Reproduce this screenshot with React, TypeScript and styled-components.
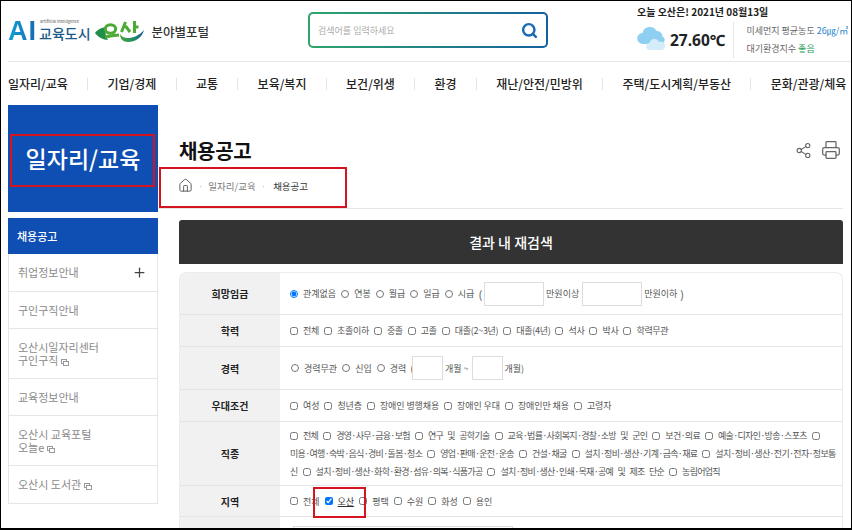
import React from "react";
import styled, { createGlobalStyle } from "styled-components";
import { Plus, Search, Share2, Printer, House } from "lucide-react";

const Global = createGlobalStyle`
  html, body { margin: 0; padding: 0; background: #fff; }
  body { font-family: "Noto Sans CJK KR", "Noto Sans", sans-serif; color: #333; }
  * { box-sizing: border-box; }
`;

const Frame = styled.div`
  position: relative;
  width: 852px;
  height: 530px;
  overflow: hidden;
  background: #fff;
  border-top: 1px solid #000;
  border-left: 1px solid #000;
  border-right: 1px solid #000;
  border-bottom: 2px solid #000;
`;

const Header = styled.header`
  display: flex;
  align-items: stretch;
  height: 61px;
  margin-left: 7px;
  border-bottom: 1px solid #e6e6e6;
`;

const Brand = styled.div`
  display: flex;
  align-items: center;
  width: 300px;
`;

const AiMark = styled.span`
  font-size: 27px;
  font-weight: 700;
  letter-spacing: 1px;
  line-height: 22px;
  font-family: "Liberation Sans", sans-serif;
  background: linear-gradient(90deg, #12a0d8, #1668b0);
  -webkit-background-clip: text;
  background-clip: text;
  color: transparent;
`;

const CityBlock = styled.span`
  position: relative;
  display: block;
  margin-left: 2px;
  font-size: 14px;
  font-weight: 500;
  line-height: 16px;
  color: #1b5a8c;
  padding-top: 3px;
`;

const Tiny = styled.span`
  position: absolute;
  left: 1px;
  top: -3px;
  font-size: 4px;
  line-height: 5px;
  color: #777;
  letter-spacing: 0;
  white-space: nowrap;
`;

const OsanMark = styled.span`
  display: flex;
  align-items: center;
  margin-left: 4px;
  width: 50px;
  height: 22px;
`;

const Portal = styled.span`
  margin-left: 7px;
  font-size: 12.5px;
  font-weight: 500;
  color: #333;
`;

const SearchSlot = styled.div`
  width: 329px;
  padding-top: 11px;
`;

const SearchBox = styled.div`
  display: flex;
  align-items: center;
  justify-content: space-between;
  width: 240px;
  height: 36px;
  padding: 0 8px;
  border: 2px solid transparent;
  border-radius: 5px;
  background: linear-gradient(#fff, #fff) padding-box,
    linear-gradient(90deg, #2fa56a, #14609f) border-box;
  font-size: 9px;
  color: #aaa;
  svg { color: #1a6cb5; }
`;

const Weather = styled.div`
  flex: 1;
  padding-top: 4px;
`;

const WeatherDate = styled.div`
  font-size: 10px;
  line-height: 14px;
  font-weight: 700;
  color: #222;
  white-space: nowrap;
`;

const WeatherRow = styled.div`
  display: flex;
  align-items: center;
  margin-top: 3px;
`;

const CloudSlot = styled.span`
  display: block;
  height: 26px;
  margin-top: -5px;
`;

const Temp = styled.span`
  margin-left: 2px;
  font-family: "Noto Sans", sans-serif;
  font-size: 15.5px;
  font-weight: 700;
  color: #222;
  white-space: nowrap;
`;

const AirInfo = styled.div`
  margin-left: 8px;
  padding-left: 12px;
  border-left: 1px solid #e6e6e6;
  font-size: 9px;
  line-height: 18px;
  color: #666;
  white-space: nowrap;
`;

const Tone = styled.span<{ $c: string }>`
  color: ${(p) => p.$c};
`;

const Nav = styled.nav`
  display: flex;
  align-items: center;
  height: 43px;
  margin-left: 7px;
  white-space: nowrap;
`;

const NavItem = styled.span`
  display: flex;
  align-items: center;
  font-size: 12px;
  font-weight: 500;
  color: #222;
  &:not(:last-child)::after {
    content: "";
    width: 1px;
    height: 12px;
    margin: 0 19.3px;
    background: #e4e4e4;
  }
`;

const Body = styled.div`
  display: flex;
  margin-left: 7px;
  gap: 21px;
`;

const Side = styled.aside`
  width: 150px;
  flex: none;
`;

const Hero = styled.div`
  display: flex;
  align-items: center;
  justify-content: center;
  height: 107px;
  padding-bottom: 2px;
  margin-bottom: 6px;
  background: #0f4fb3;
  color: #fff;
  font-size: 23px;
  font-weight: 500;
`;

const Menu = styled.ul`
  list-style: none;
  margin: 0;
  padding: 0;
  border: 1px solid #e6e6e6;
  border-top: 0;
`;

const MenuItem = styled.li<{ $active?: boolean; $h: number }>`
  display: flex;
  align-items: center;
  justify-content: space-between;
  height: ${(p) => p.$h}px;
  padding: 0 10px 0 9px;
  margin: ${(p) => (p.$active ? "0 -1px" : "0")};
  font-size: 11px;
  line-height: 13px;
  color: ${(p) => (p.$active ? "#fff" : "#8a8a8a")};
  font-weight: ${(p) => (p.$active ? 500 : 400)};
  background: ${(p) => (p.$active ? "#0f4fb3" : "#fff")};
  &:not(:last-child) { border-bottom: ${(p) => (p.$active ? "0" : "1px solid #e6e6e6")}; }
`;

const Ext = styled.svg`
  margin-left: 3px;
  vertical-align: -1px;
`;

const Main = styled.main`
  flex: 1;
  min-width: 0;
  padding-right: 8px;
`;

const TitleBar = styled.div`
  display: flex;
  align-items: center;
  justify-content: space-between;
  height: 32px;
  margin-top: 29px;
`;

const Title = styled.h1`
  margin: 0;
  font-size: 20px;
  font-weight: 700;
  color: #111;
  letter-spacing: -0.3px;
`;

const Tools = styled.div`
  display: flex;
  align-items: center;
  gap: 9px;
  padding-right: 2px;
  svg { color: #666; }
`;

const Crumbs = styled.div`
  display: flex;
  align-items: center;
  height: 43px;
  margin: 0 0 0 -21px;
  padding: 0 0 3px 20px;
  border-bottom: 1px solid #e6e6e6;
  font-size: 9.5px;
  color: #777;
  svg { color: #555; }
`;

const Dot = styled.span`
  margin: 0 5px;
  color: #bbb;
`;

const Current = styled.span`
  margin-left: 2px;
  color: #333;
`;

const SearchTitle = styled.div`
  display: flex;
  align-items: center;
  justify-content: center;
  height: 44px;
  margin-top: 11px;
  border-radius: 3px 3px 0 0;
  background: #333;
  color: #fff;
  font-size: 14px;
  font-weight: 500;
`;

const Table = styled.div`
  margin-top: 8px;
  border-radius: 7px 7px 0 0;
  border: 1px solid #ececec;
  border-bottom: 0;
  overflow: hidden;
`;

const Row = styled.div<{ $h: number }>`
  display: flex;
  height: ${(p) => p.$h}px;
  border-bottom: 1px solid #e4e4e4;
`;

const Head = styled.div`
  display: flex;
  align-items: center;
  justify-content: center;
  width: 100px;
  flex: none;
  background: #f1f1f1;
  font-size: 10px;
  font-weight: 700;
  color: #222;
`;

const Cell = styled.div<{ $top?: boolean }>`
  flex: 1;
  display: flex;
  flex-direction: column;
  justify-content: ${(p) => (p.$top ? "flex-start" : "center")};
  padding: ${(p) => (p.$top ? "9px 0 0 10px" : "0 0 0 10px")};
  font-size: 9px;
  color: #555;
  white-space: nowrap;
`;

const Line = styled.div<{ $ls?: number; $pad?: number }>`
  display: flex;
  align-items: center;
  height: 18px;
  padding-left: ${(p) => p.$pad ?? 0}px;
  letter-spacing: ${(p) => p.$ls ?? 0}px;
`;

const JobLine = styled(Line)`
  letter-spacing: -0.7px;
  word-spacing: 3px;
`;

const Choice = styled.label`
  display: inline-flex;
  align-items: center;
  margin-right: 5px;
`;

const Box = styled.input`
  width: 8px;
  height: 8px;
  margin: 0 5px 0 0;
  flex: none;
`;

const Underlined = styled.span`
  text-decoration: underline;
  color: #333;
`;

const Amount = styled.span<{ $w: number; $h: number }>`
  display: inline-block;
  flex: none;
  width: ${(p) => p.$w}px;
  height: ${(p) => p.$h}px;
  margin: 0 2px 0 3px;
  border: 1px solid #ddd;
  background: #fff;
`;

const Paren = styled.span<{ $close?: number }>`
  font-size: 11px;
  margin: 0 ${(p) => p.$close ?? -1}px 0 -1px;
`;

const ParenEnd = styled.span`
  font-size: 11px;
  margin-left: 3px;
`;

const Mark = styled.div<{ $x: number; $y: number; $w: number; $h: number }>`
  position: absolute;
  left: ${(p) => p.$x}px;
  top: ${(p) => p.$y}px;
  width: ${(p) => p.$w}px;
  height: ${(p) => p.$h}px;
  border: 2px solid #d4141f;
  pointer-events: none;
`;

const ExtIcon = () => (
  <Ext width="8" height="7" viewBox="0 0 8 7" fill="none" stroke="#999" strokeWidth="1">
    <rect x="0.5" y="0.5" width="5" height="4" />
    <rect x="2.5" y="2.5" width="5" height="4" fill="#fff" />
  </Ext>
);

const Cloud = () => (
  <svg width="31" height="26" viewBox="0 0 31 26">
    <path d="M6 19a5.5 5.5 0 0 1-.5-11A7.5 7.5 0 0 1 19.5 6a5.5 5.5 0 0 1 6 5.5A4 4 0 0 1 24 19z" fill="#8fd0f2" />
    <path d="M13 25a3.5 3.5 0 0 1-.5-7 5 5 0 0 1 9.5-1 4 4 0 0 1 3.5 8z" fill="#d5edf8" />
  </svg>
);

const Swoosh = () => (
  <svg width="50" height="21" viewBox="0 0 50 21">
    <defs>
      <linearGradient id="sw" x1="0" x2="1" y1="0" y2="0">
        <stop offset="0" stopColor="#46a83a" />
        <stop offset="0.6" stopColor="#1f8a6a" />
        <stop offset="1" stopColor="#14579f" />
      </linearGradient>
    </defs>
    <path d="M0 12C3 8 8 6 12 6c-2 4-2 8 1 13C8 19 3 16 0 12z" fill="#1f8f4a" />
    <ellipse cx="15.5" cy="8" rx="5.2" ry="4.3" fill="none" stroke="#4caa35" strokeWidth="3" />
    <path d="M10 16q7-1.500 14-2" stroke="#4caa35" strokeWidth="3" fill="none" />
    <path d="M30.500 1L26.500 11M30.500 5L35 11M39.500 0V12M39.500 6H43.500" stroke="#4caa35" strokeWidth="3" fill="none" />
    <path d="M25 13c3 6 15 6 24-4-2 8-9 12-16 12-5 0-8-3-8-8z" fill="url(#sw)" />
  </svg>
);

const nav = ["일자리/교육", "기업/경제", "교통", "보육/복지", "보건/위생", "환경", "재난/안전/민방위", "주택/도시계획/부동산", "문화/관광/체육"];
const pay = ["연봉", "월급", "일급", "시급"];
const edu = ["전체", "초졸이하", "중졸", "고졸", "대졸(2~3년)", "대졸(4년)", "석사", "박사", "학력무관"];
const pref = ["여성", "청년층", "장애인 병행채용", "장애인 우대", "장애인만 채용", "고령자"];

const Check = ({ label }: { label: string }) => (
  <Choice><Box type="checkbox" readOnly />{label}</Choice>
);
const Radio = ({ label, on }: { label: string; on?: boolean }) => (
  <Choice><Box type="radio" readOnly checked={!!on} />{label}</Choice>
);

export default function App() {
  return (
    <Frame>
      <Global />
      <Header>
        <Brand>
          <AiMark>AI</AiMark>
          <CityBlock><Tiny>artificial intelligence</Tiny>교육도시</CityBlock>
          <OsanMark><Swoosh /></OsanMark>
          <Portal>분야별포털</Portal>
        </Brand>
        <SearchSlot>
          <SearchBox>검색어를 입력하세요<Search size={17} strokeWidth={3.5} /></SearchBox>
        </SearchSlot>
        <Weather>
          <WeatherDate>오늘 오산은! 2021년 08월13일</WeatherDate>
          <WeatherRow>
            <CloudSlot><Cloud /></CloudSlot>
            <Temp>27.60℃</Temp>
            <AirInfo>
              <div>미세먼지 평균농도 <Tone $c="#2a86d0">26㎍/㎥</Tone></div>
              <div>대기환경지수 <Tone $c="#2f9e5a">좋음</Tone></div>
            </AirInfo>
          </WeatherRow>
        </Weather>
      </Header>
      <Nav>
        {nav.map((n) => <NavItem key={n}>{n}</NavItem>)}
      </Nav>
      <Body>
        <Side>
          <Hero>일자리/교육</Hero>
          <Menu>
            <MenuItem $active $h={36}>채용공고</MenuItem>
            <MenuItem $h={38}>취업정보안내<Plus size={15} color="#444" strokeWidth={2} /></MenuItem>
            <MenuItem $h={37}>구인구직안내</MenuItem>
            <MenuItem $h={50}><span>오산시일자리센터<br />구인구직<ExtIcon /></span></MenuItem>
            <MenuItem $h={37}>교육정보안내</MenuItem>
            <MenuItem $h={50}><span>오산시 교육포털<br />오늘e<ExtIcon /></span></MenuItem>
            <MenuItem $h={37}><span>오산시 도서관<ExtIcon /></span></MenuItem>
          </Menu>
        </Side>
        <Main>
          <TitleBar>
            <Title>채용공고</Title>
            <Tools>
              <Share2 size={17} strokeWidth={1.5} />
              <Printer size={20} strokeWidth={1.5} />
            </Tools>
          </TitleBar>
          <Crumbs>
            <House size={15} strokeWidth={1.5} />
            <Dot>·</Dot>일자리/교육<Dot>·</Dot><Current>채용공고</Current>
          </Crumbs>
          <SearchTitle>결과 내 재검색</SearchTitle>
          <Table>
            <Row $h={42}>
              <Head>희망임금</Head>
              <Cell>
                <Line>
                  <Radio label="관계없음" on />
                  {pay.map((p) => <Radio key={p} label={p} />)}
                  <Paren>(</Paren><Amount $w={60} $h={24} />만원이상<Amount $w={60} $h={24} />만원이하<ParenEnd>)</ParenEnd>
                </Line>
              </Cell>
            </Row>
            <Row $h={32}>
              <Head>학력</Head>
              <Cell><Line $ls={-0.3}>{edu.map((e) => <Check key={e} label={e} />)}</Line></Cell>
            </Row>
            <Row $h={43}>
              <Head>경력</Head>
              <Cell>
                <Line $pad={1}>
                  <Radio label="경력무관" /><Radio label="신입" /><Radio label="경력" />
                  <Paren $close={-5}>(</Paren><Amount $w={31} $h={24} />개월 ~<Amount $w={31} $h={24} />개월)
                </Line>
              </Cell>
            </Row>
            <Row $h={32}>
              <Head>우대조건</Head>
              <Cell><Line $ls={-0.1}>{pref.map((e) => <Check key={e} label={e} />)}</Line></Cell>
            </Row>
            <Row $h={64}>
              <Head>직종</Head>
              <Cell>
                <JobLine>
                  {["전체", "경영·사무·금융·보험", "연구 및 공학기술", "교육·법률·사회복지·경찰·소방 및 군인", "보건·의료", "예술·디자인·방송·스포츠"].map((e) => <Check key={e} label={e} />)}
                  <Box type="checkbox" readOnly />
                </JobLine>
                <JobLine>
                  <Choice>미용·여행·숙박·음식·경비·돌봄·청소</Choice>
                  {["영업·판매·운전·운송", "건설·채굴", "설치·정비·생산·기계·금속·재료"].map((e) => <Check key={e} label={e} />)}
                  <Box type="checkbox" readOnly />설치·정비·생산·전기·전자·정보통
                </JobLine>
                <JobLine>
                  <Choice>신</Choice>
                  {["설치·정비·생산·화학·환경·섬유·의복·식품가공", "설치·정비·생산·인쇄·목재·공예 및 제조 단순", "농림어업직"].map((e) => <Check key={e} label={e} />)}
                </JobLine>
              </Cell>
            </Row>
            <Row $h={31}>
              <Head>지역</Head>
              <Cell>
                <Line>
                  <Check label="전체" />
                  <Choice><Box type="checkbox" readOnly checked /><Underlined>오산</Underlined></Choice>
                  {["평택", "수원", "화성", "용인"].map((e) => <Check key={e} label={e} />)}
                </Line>
              </Cell>
            </Row>
            <Row $h={30}>
              <Head />
              <Cell $top><Amount $w={220} $h={24} /></Cell>
            </Row>
          </Table>
        </Main>
      </Body>
      <Mark $x={9} $y={133} $w={145} $h={53} />
      <Mark $x={158} $y={166} $w={188} $h={41} />
      <Mark $x={312} $y={486} $w={53} $h={31} />
    </Frame>
  );
}
